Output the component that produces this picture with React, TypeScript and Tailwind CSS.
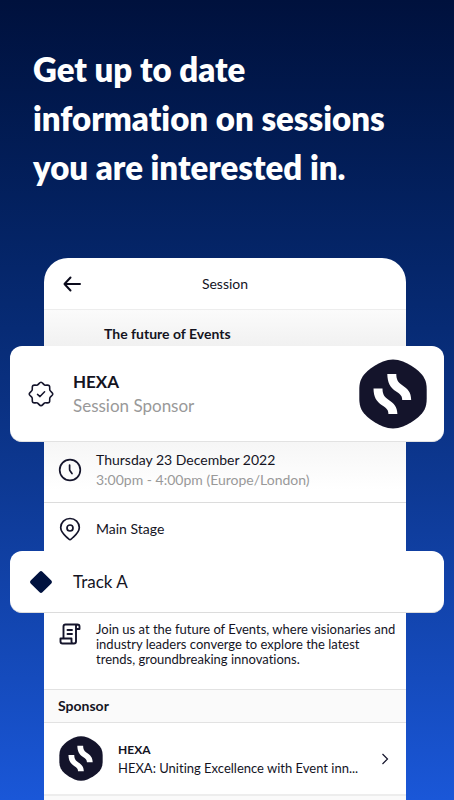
import type { ReactNode } from "react";

const sponsor = {
  name: "HEXA",
  tagline: "HEXA: Uniting Excellence with Event inn...",
};

function HexaLogo({ className }: { className: string }) {
  return (
    <svg viewBox="0 0 68 70" className={className} aria-hidden="true">
      <path
        d="M24 2.500Q34-1.500 44 2.500C50 5 55 8 59.500 12 65 17 67.700 22 67.700 30V40C67.700 48 65 53 59.500 58 55 62 50 65 44 67.500Q34 71.500 24 67.500C18 65 13 62 8.500 58 3 53 .3 48 .3 40V30C.3 22 3 17 8.500 12 13 8 18 5 24 2.500Z"
        fill="#14142b"
      />
      <path d="M28.300 15h9c0 5 1.500 8 5 10.500C49 30 52 33 52.200 41h-9c0-4-1.500-5.500-6-8.500C31 28.500 28.500 23.500 28.300 15Z" fill="#fff" />
      <path d="M14.500 29.500h9c0 5 1.500 8 5 10.500C35.200 44.500 38.200 47.500 38.400 55h-9c0-4-1.500-5.500-6-8.500C17.200 42.500 14.700 38 14.500 29.500Z" fill="#fff" />
    </svg>
  );
}

function ArrowIcon() {
  return (
    <svg viewBox="0 0 18 16" className="h-4 w-[18px]" fill="none" stroke="#0b0b1c" strokeWidth="2" strokeLinecap="round" strokeLinejoin="round">
      <path d="M17 8H1.500M7.500 1.500 1.500 8l6 6.500" />
    </svg>
  );
}

function BadgeIcon() {
  return (
    <svg viewBox="0 0 26 26" className="size-[26px]" fill="none" stroke="#14142b" strokeWidth="1.600" strokeLinecap="round" strokeLinejoin="round">
      <path d="M13 1.200c1.500 0 2.200 2.200 3.600 2.800s3.500-.5 4.600.6.100 3.200.7 4.600 2.900 2.200 2.900 3.800-2.300 2.300-2.900 3.700.4 3.600-.7 4.700-3.200 0-4.600.6-2.100 2.800-3.600 2.800-2.200-2.200-3.600-2.800-3.500.5-4.600-.6-.1-3.300-.7-4.700S1.200 14.600 1.200 13s2.300-2.400 2.900-3.800-.4-3.500.7-4.600 3.200 0 4.600-.6S11.500 1.200 13 1.200Z" />
      <path d="m9.500 13.400 2.500 2.200 4.600-4.800" strokeWidth="1.500" />
    </svg>
  );
}

function ClockIcon() {
  return (
    <svg viewBox="0 0 24 24" className="size-6" fill="none" stroke="#14142b" strokeWidth="1.700" strokeLinecap="round" strokeLinejoin="round">
      <circle cx="12" cy="12" r="10.300" />
      <path d="M11.600 7v4.300q0 1 .6 1.700l1.800 2.500" />
    </svg>
  );
}

function PinIcon() {
  return (
    <svg viewBox="0 0 24 24" className="size-6" fill="none" stroke="#14142b" strokeWidth="1.700" strokeLinejoin="round">
      <path d="M12 1.500c-5.200 0-9.300 4-9.300 9 0 4.500 3.300 7.200 6.400 10l1.600 1.500q1.300 1.200 2.600 0l1.600-1.500c3.100-2.800 6.400-5.500 6.400-10 0-5-4.100-9-9.300-9Z" />
      <circle cx="12" cy="11" r="3" />
    </svg>
  );
}

function ScrollIcon() {
  return (
    <svg viewBox="0 0 24 24" className="size-6" fill="none" stroke="#14142b" strokeWidth="1.900" strokeLinecap="round" strokeLinejoin="round">
      <path d="M5.500 16.500V4.500A2 2 0 0 1 7.500 2.500H19.500a2 2 0 0 1 2 2v2.500h-3.500M18 7V4.500a1.800 1.800 0 0 1 1.500-2M18 7V19.500a2 2 0 0 1-2 2H4.500a2 2 0 0 1-2-2v-3H13.500v3a2 2 0 0 0 2.500 2M9.500 8h4.500M9.500 12h4.500" />
    </svg>
  );
}

function InfoRow({ icon, children, className }: { icon: ReactNode; children: ReactNode; className: string }) {
  return (
    <div className={`flex gap-[14px] pr-2 pl-[14px] ${className}`}>
      <span className="shrink-0">{icon}</span>
      <div className="min-w-0">{children}</div>
    </div>
  );
}

export default function App() {
  return (
    <main className="flex min-h-screen flex-col overflow-hidden bg-linear-to-b from-[#00113d] via-[#0a3182] to-[#1a57d8] font-['Lato','Liberation_Sans',sans-serif] text-[#14141f] [font-variant-ligatures:none]">
      <h1 className="px-[33px] pt-[45px] text-[33px] leading-[49px] font-extrabold text-white">
        Get up to date
        <br />
        information on sessions
        <br />
        you are interested in.
      </h1>

      <section className="mt-[66px] mr-12 ml-11 flex grow flex-col rounded-t-3xl bg-white">
        <header className="grid h-[52px] grid-cols-[1fr_auto_1fr] items-center border-b border-[#ededed] px-[19px]">
          <button type="button" aria-label="Back" className="w-fit cursor-pointer">
            <ArrowIcon />
          </button>
          <h2 className="text-[14px] leading-5">Session</h2>
        </header>

        <div className="h-9 bg-linear-to-b from-[#fbfbfb] to-[#f1f1f1] pt-[14px] pl-[60px]">
          <h3 className="text-[14px] leading-5 font-bold">The future of Events</h3>
        </div>

        <div className="-mr-[38px] -ml-[34px] flex h-24 items-center rounded-xl border-b border-[#e2e2e2] bg-white pr-[17px] pl-[18px]">
          <BadgeIcon />
          <div className="ml-[19px] grow">
            <p className="text-[17px] leading-6 font-bold">{sponsor.name}</p>
            <p className="text-[17px] leading-6 text-[#999]">Session Sponsor</p>
          </div>
          <HexaLogo className="h-[70px] w-[68px]" />
        </div>

        <InfoRow icon={<ClockIcon />} className="h-[61px] items-center border-b border-[#dcdcdc] bg-linear-to-b from-[#f6f6f6] to-white to-80% pb-1">
          <p className="text-[14px] leading-5">Thursday 23 December 2022</p>
          <p className="text-[14px] leading-5 text-[#999]">3:00pm - 4:00pm (Europe/London)</p>
        </InfoRow>

        <InfoRow icon={<PinIcon />} className="h-12 items-center pt-1">
          <p className="text-[14px] leading-5">Main Stage</p>
        </InfoRow>

        <div className="-mr-[38px] -ml-[34px] flex h-[62px] items-center rounded-xl border-b border-[#dcdcdc] bg-white pl-[19px]">
          <svg viewBox="0 0 24 24" className="size-6" aria-hidden="true">
            <rect x="3.700" y="3.700" width="16.600" height="16.600" rx="2" transform="rotate(45 12 12)" fill="#00123f" />
          </svg>
          <p className="ml-5 text-[17px] leading-6">Track A</p>
        </div>

        <InfoRow icon={<ScrollIcon />} className="h-[76px] items-start pt-[9px]">
          <p className="text-[13px] leading-[15px]">
            Join us at the future of Events, where visionaries and industry leaders converge to explore the latest trends,
            groundbreaking innovations.
          </p>
        </InfoRow>

        <h3 className="border-y border-[#e2e2e2] bg-[#fafafa] px-[14px] py-[6px] text-[14px] leading-5 font-bold">Sponsor</h3>

        <a href="#hexa" className="flex h-[73px] items-center border-b-2 border-[#ededed] pr-[17px] pl-[15px]">
          <HexaLogo className="h-[45px] w-11 shrink-0" />
          <div className="ml-[15px] grow">
            <p className="text-[12px] leading-[18px] font-bold">{sponsor.name}</p>
            <p className="text-[13px] leading-[18px]">{sponsor.tagline}</p>
          </div>
          <svg viewBox="0 0 8 12" className="h-3 w-2 shrink-0" fill="none" stroke="#14142b" strokeWidth="1.200" aria-hidden="true">
            <path d="m1.500 1 5 5-5 5" />
          </svg>
        </a>
        <div className="grow bg-[#fafafa]" />
      </section>
    </main>
  );
}
